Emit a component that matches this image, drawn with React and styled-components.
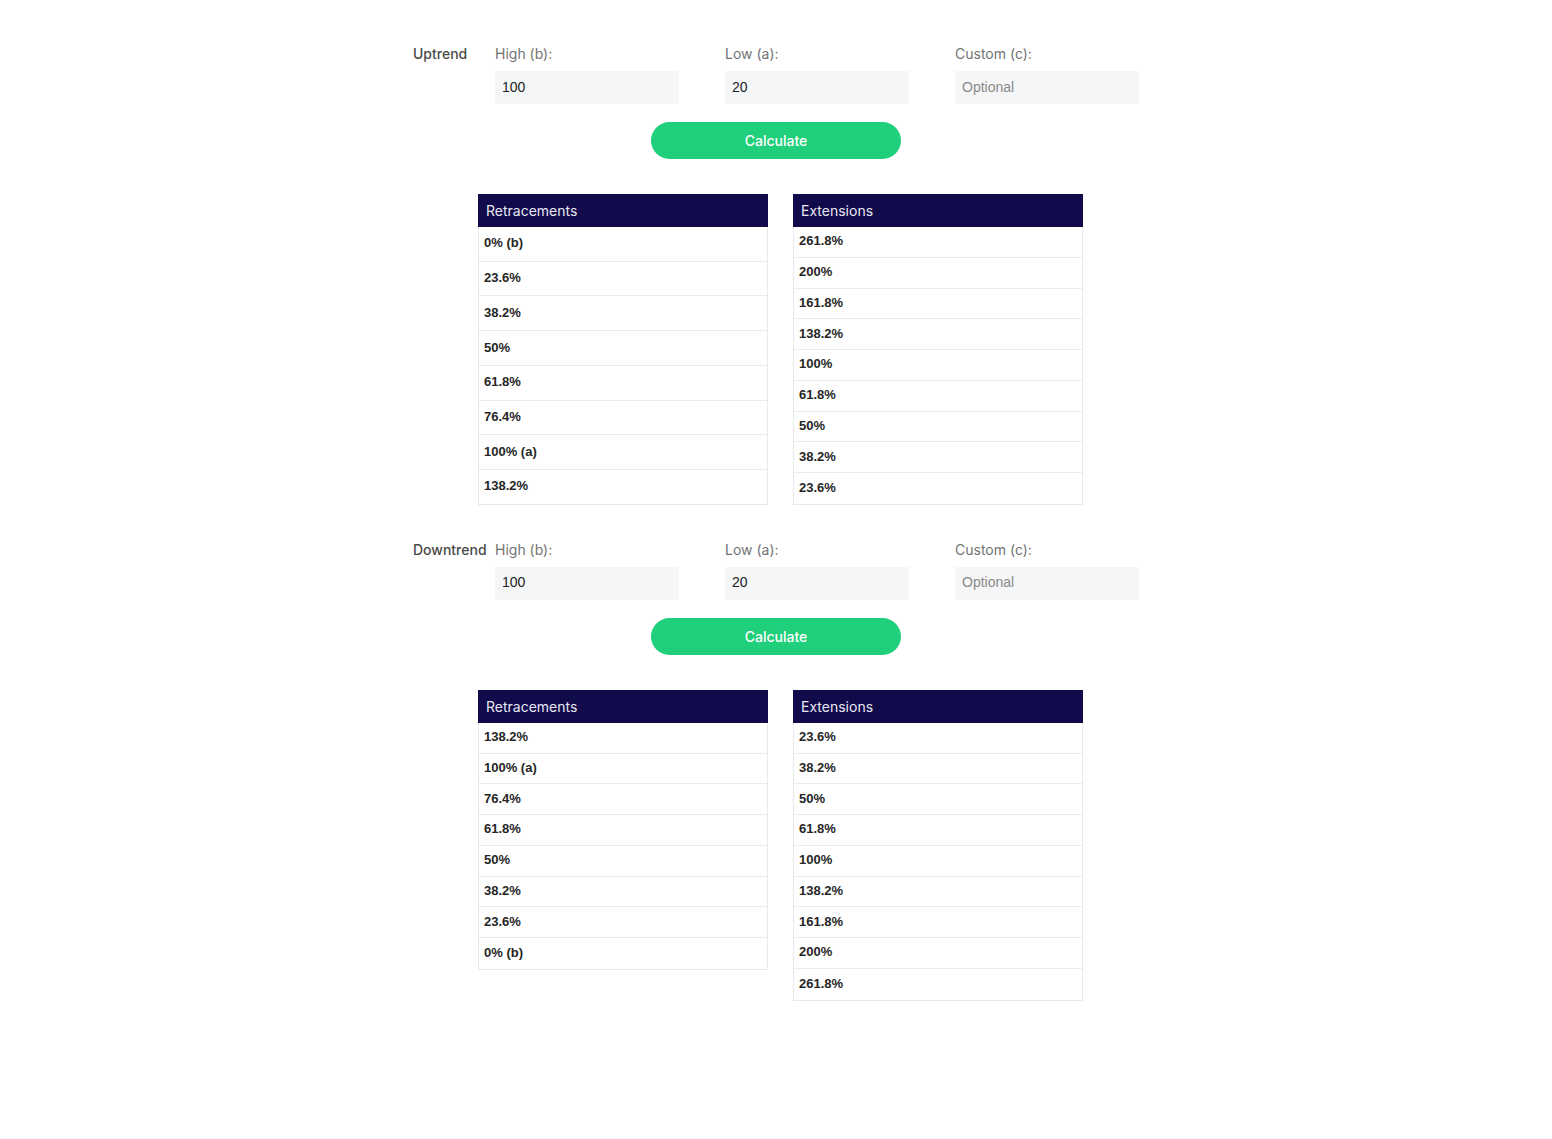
import React from "react";
import styled, { createGlobalStyle } from "styled-components";

const GlobalStyle = createGlobalStyle`
  body {
    margin: 0;
    background: #ffffff;
    font-family: Inter, "Noto Sans", sans-serif;
  }
`;

const RETRACEMENTS = ["0% (b)", "23.6%", "38.2%", "50%", "61.8%", "76.4%", "100% (a)", "138.2%"];
const EXTENSIONS = ["261.8%", "200%", "161.8%", "138.2%", "100%", "61.8%", "50%", "38.2%", "23.6%"];

function ResultTable({ title, rows }) {
  return (
    <Table>
      <TableHead>{title}</TableHead>
      {rows.map((r) => (
        <TableRow key={r}>{r}</TableRow>
      ))}
    </Table>
  );
}

function TrendBlock({ name, retracements, extensions, stretch }) {
  return (
    <Section>
      <InputRow>
        <TrendLabel>{name}</TrendLabel>
        <Fields>
          <Field>
            <FieldLabel>High (b):</FieldLabel>
            <Input defaultValue="100" />
          </Field>
          <Field>
            <FieldLabel>Low (a):</FieldLabel>
            <Input defaultValue="20" />
          </Field>
          <Field>
            <FieldLabel>Custom (c):</FieldLabel>
            <Input placeholder="Optional" />
          </Field>
        </Fields>
      </InputRow>
      <ButtonRow>
        <CalcButton>Calculate</CalcButton>
      </ButtonRow>
      <Tables $stretch={stretch}>
        <ResultTable title="Retracements" rows={retracements} />
        <ResultTable title="Extensions" rows={extensions} />
      </Tables>
    </Section>
  );
}

export default function App() {
  return (
    <>
      <GlobalStyle />
      <Page>
        <TrendBlock name="Uptrend" retracements={RETRACEMENTS} extensions={EXTENSIONS} stretch />
        <TrendBlock
          name="Downtrend"
          retracements={[...RETRACEMENTS].reverse()}
          extensions={[...EXTENSIONS].reverse()}
        />
      </Page>
    </>
  );
}

const Page = styled.div`
  width: 726px;
  margin: 0 auto;
  padding-top: 44px;
  display: flex;
  flex-direction: column;
  gap: 35px;
`;
const Section = styled.div`
  display: flex;
  flex-direction: column;
`;
const InputRow = styled.div`
  display: flex;
`;
const TrendLabel = styled.div`
  width: 82px;
  flex: none;
  font-size: 14px;
  line-height: 20px;
  font-weight: 500;
  color: #4a4a4a;
`;
const Fields = styled.div`
  display: flex;
  gap: 46px;
`;
const Field = styled.div`
  width: 184px;
  display: flex;
  flex-direction: column;
  gap: 7px;
`;
const FieldLabel = styled.label`
  font-size: 14px;
  line-height: 20px;
  color: #737373;
`;
const Input = styled.input`
  box-sizing: border-box;
  width: 184px;
  height: 33px;
  border: none;
  outline: none;
  background: #f5f6f7;
  padding: 0 7px 2px;
  font-family: "Liberation Sans", Arial, sans-serif;
  font-size: 14px;
  color: #222;
  &::placeholder {
    color: #8a8a8a;
  }
`;
const ButtonRow = styled.div`
  display: flex;
  justify-content: center;
  margin-top: 18px;
`;
const CalcButton = styled.button`
  width: 250px;
  height: 37px;
  border: none;
  border-radius: 19px;
  background: #1fcf7b;
  color: #ffffff;
  font-family: Inter, "Noto Sans", sans-serif;
  font-size: 14px;
  font-weight: 500;
  cursor: pointer;
`;
const Tables = styled.div`
  display: flex;
  gap: 25px;
  padding-left: 65px;
  margin-top: 35px;
  align-items: ${(p) => (p.$stretch ? "stretch" : "flex-start")};
`;
const Table = styled.div`
  box-sizing: border-box;
  width: 290px;
  display: flex;
  flex-direction: column;
  border: 1px solid #e9e9e9;
  border-top: none;
`;
const TableHead = styled.div`
  height: 33px;
  margin: 0 -1px;
  padding: 0 8px;
  background: #110a4b;
  color: #e8e8f2;
  font-size: 14px;
  line-height: 33px;
`;
const TableRow = styled.div`
  flex: 1 1 auto;
  box-sizing: border-box;
  min-height: 30.75px;
  display: flex;
  align-items: center;
  padding: 0 5px 2px;
  border-bottom: 1px solid #ececec;
  font-family: "Liberation Sans", Arial, sans-serif;
  font-size: 13px;
  font-weight: 700;
  color: #262626;
  &:last-child {
    border-bottom: none;
  }
`;
